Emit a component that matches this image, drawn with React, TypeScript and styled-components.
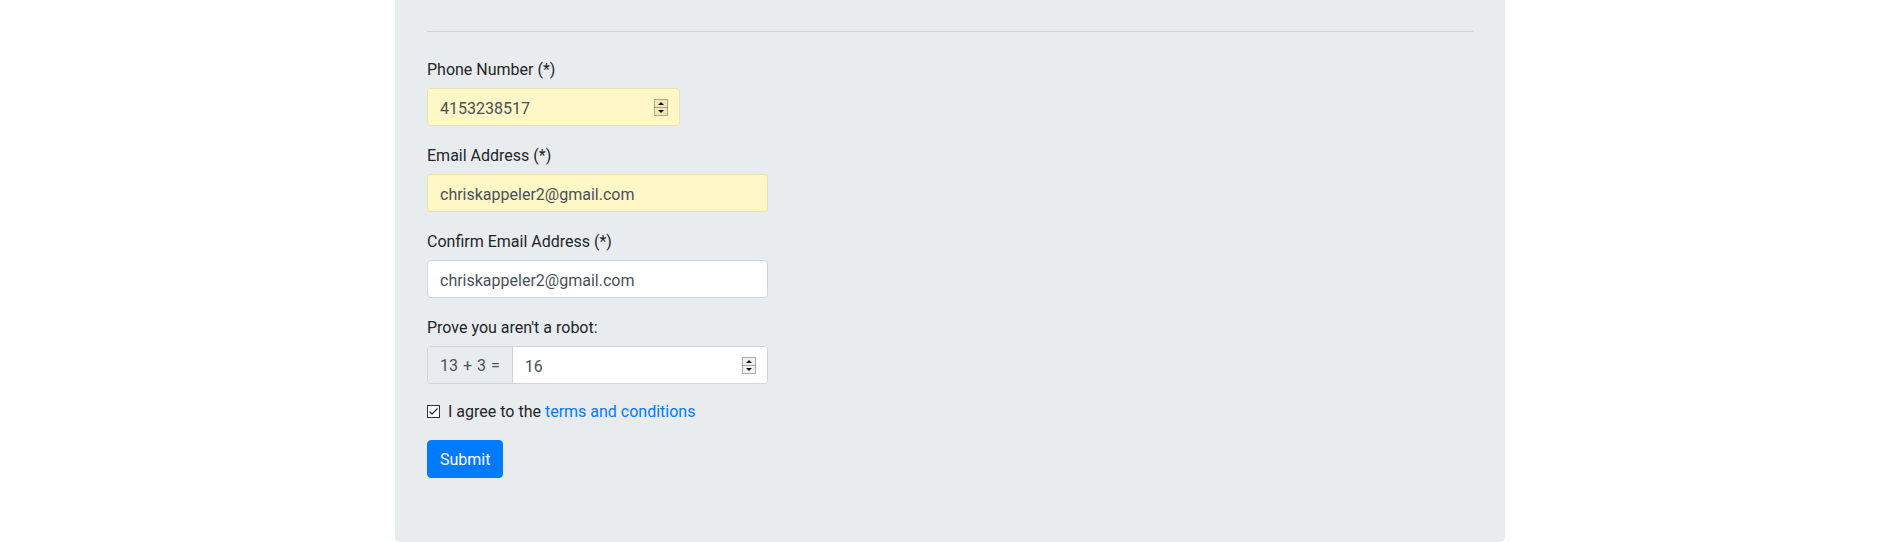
import styled, { createGlobalStyle } from 'styled-components';

const GlobalStyle = createGlobalStyle`
  body {
    margin: 0;
    background: #ffffff;
    font-family: Roboto, 'Noto Sans', sans-serif;
    font-size: 16px;
    line-height: 24px;
    color: #212529;
  }
`;

const AUTOFILL = '#fff7c6';

const Container = styled.div`
  width: 1110px;
  margin-left: 395px;
`;

const Jumbotron = styled.div`
  background-color: #e9ecef;
  border-radius: 0 0 5px 5px;
  padding: 31px 32px 64px;
`;

const Divider = styled.hr`
  margin: 0 0 24px;
  border: 0;
  border-top: 1px solid rgba(0, 0, 0, 0.1);
`;

const FormGroup = styled.div`
  margin-bottom: 16px;
`;

const Label = styled.label`
  display: block;
  padding-top: 2px;
  margin-bottom: 6px;
  line-height: 24px;
`;

const Field = styled.div<{ $width: number; $autofill?: boolean }>`
  display: flex;
  align-items: center;
  box-sizing: border-box;
  width: ${p => p.$width}px;
  height: 38px;
  border: 1px solid ${p => (p.$autofill ? '#ebe1ab' : '#ced4da')};
  border-radius: 4px;
  background-color: ${p => (p.$autofill ? AUTOFILL : '#ffffff')};
  overflow: hidden;
`;

const Input = styled.input`
  flex: 1;
  width: 0;
  min-width: 0;
  height: 100%;
  box-sizing: border-box;
  border: 0;
  padding: 2px 12px 0;
  background: transparent;
  font: inherit;
  color: #495057;
  outline: none;
`;

const Addon = styled.span`
  display: flex;
  align-items: center;
  height: 100%;
  box-sizing: border-box;
  padding: 2px 12px 0;
  background-color: #e9ecef;
  border-right: 1px solid #ced4da;
  color: #495057;
  white-space: nowrap;
  word-spacing: 1px;
`;

const InputPart = styled.div`
  display: flex;
  align-items: center;
  flex: 1;
  min-width: 0;
  height: 100%;
  background-color: #ffffff;
`;

const SpinnerSvg = styled.svg`
  flex-shrink: 0;
  margin-right: 11px;
`;

const CheckRow = styled.div`
  display: flex;
  align-items: center;
  margin-bottom: 16px;
  line-height: 24px;
`;

const CheckSvg = styled.svg`
  flex-shrink: 0;
  margin-right: 8px;
  margin-top: -2px;
`;

const Link = styled.a`
  color: #007bff;
  text-decoration: none;
  margin-left: 4px;
`;

const Button = styled.button`
  height: 38px;
  padding: 1px 12px 0;
  border: 1px solid #007bff;
  border-radius: 4px;
  background-color: #007bff;
  color: #ffffff;
  font: inherit;
  cursor: pointer;
`;

const Spinner = () => (
  <SpinnerSvg width="14" height="17" viewBox="0 0 14 17">
    <rect x="0.5" y="0.5" width="13" height="16" fill="rgba(0,0,0,0.06)" stroke="rgba(0,0,0,0.3)" />
    <line x1="0.5" y1="8.5" x2="13.5" y2="8.5" stroke="rgba(0,0,0,0.3)" />
    <polygon points="7,3 10,6 4,6" fill="#111" />
    <polygon points="4,11 10,11 7,14" fill="#111" />
  </SpinnerSvg>
);

const Checkbox = () => (
  <CheckSvg width="13" height="13" viewBox="0 0 13 13">
    <rect x="0.5" y="0.5" width="12" height="12" fill="#ffffff" stroke="#333" />
    <polyline points="2.5,6.5 5,9 10.5,3.5" fill="none" stroke="#333" strokeWidth="1.3" />
  </CheckSvg>
);

export default function App() {
  return (
    <>
      <GlobalStyle />
      <Container>
        <Jumbotron>
          <Divider />
          <form onSubmit={e => e.preventDefault()}>
            <FormGroup>
              <Label>Phone Number (*)</Label>
              <Field $width={253} $autofill>
                <Input defaultValue="4153238517" />
                <Spinner />
              </Field>
            </FormGroup>
            <FormGroup>
              <Label>Email Address (*)</Label>
              <Field $width={341} $autofill>
                <Input defaultValue="chriskappeler2@gmail.com" />
              </Field>
            </FormGroup>
            <FormGroup>
              <Label>Confirm Email Address (*)</Label>
              <Field $width={341}>
                <Input defaultValue="chriskappeler2@gmail.com" />
              </Field>
            </FormGroup>
            <FormGroup>
              <Label>Prove you aren't a robot:</Label>
              <Field $width={341}>
                <Addon>13 + 3 =</Addon>
                <InputPart>
                  <Input defaultValue="16" />
                  <Spinner />
                </InputPart>
              </Field>
            </FormGroup>
            <CheckRow>
              <Checkbox />
              I agree to the
              <Link href="#">terms and conditions</Link>
            </CheckRow>
            <Button type="submit">Submit</Button>
          </form>
        </Jumbotron>
      </Container>
    </>
  );
}
